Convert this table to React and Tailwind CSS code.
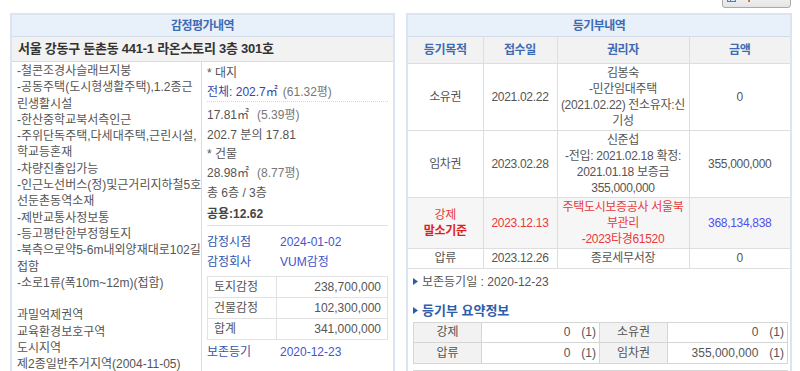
import React from 'react';

const leftLines = [
  '-철콘조경사슬래브지붕',
  '-공동주택(도시형생활주택),1.2종근',
  '린생활시설',
  '-한산중학교북서측인근',
  '-주위단독주택,다세대주택,근린시설,',
  '학교등혼재',
  '-차량진출입가능',
  '-인근노선버스(정)및근거리지하철5호',
  '선둔촌동역소재',
  '-제반교통사정보통',
  '-등고평탄한부정형토지',
  '-북측으로약5-6m내외양재대로102길',
  '접함',
  '-소로1류(폭10m~12m)(접함)',
  '',
  '과밀억제권역',
  '교육환경보호구역',
  '도시지역',
  '제2종일반주거지역(2004-11-05)',
];

const appraisal = [
  ['토지감정', '238,700,000'],
  ['건물감정', '102,300,000'],
  ['합계', '341,000,000'],
];

const registry = [
  { kind: ['소유권'], date: '2021.02.22', holder: ['김봉숙', '-민간임대주택', '(2021.02.22) 전소유자:신', '기성'], amount: '0' },
  { kind: ['임차권'], date: '2023.02.28', holder: ['신준섭', '-전입: 2021.02.18 확정:', '2021.01.18 보증금', '355,000,000'], amount: '355,000,000' },
  { kind: ['강제', '말소기준'], date: '2023.12.13', holder: ['주택도시보증공사 서울북', '부관리', '-2023타경61520'], amount: '368,134,838', base: true },
  { kind: ['압류'], date: '2023.12.26', holder: ['종로세무서장'], amount: '0' },
];

const summary = [
  ['강제', '0', '소유권', '0'],
  ['압류', '0', '임차권', '355,000,000'],
];

function Bullet() {
  return (
    <svg width="5" height="7" viewBox="0 0 5 7" className="shrink-0">
      <path d="M0 0 L5 3.5 L0 7 Z" fill="#2f5ea8" />
    </svg>
  );
}

function PanelHeader({ children }) {
  return (
    <div className="h-[22px] bg-[#e8f0fa] border-b border-[#d3dde9] flex items-center justify-center text-[12px] font-bold text-[#3d6bb3] tracking-[-0.5px]">
      {children}
    </div>
  );
}

export default function App() {
  return (
    <div className="w-[800px] h-[371px] overflow-hidden bg-white text-[12px] text-[#555] font-['Liberation_Sans','Noto_Sans_CJK_KR',sans-serif]">
      {/* top toolbar, button is cut off at the top */}
      <div className="h-[9px] overflow-hidden flex justify-end pr-[9px]">
        <button className="-mt-[14px] h-[22px] w-[69px] flex items-center gap-[4px] pl-[4px] border border-[#a9a9a9] rounded-[3px] bg-gradient-to-b from-white to-[#e4e4e4] text-[12px] text-[#333]">
          <svg width="9" height="9" viewBox="0 0 9 9">
            <rect x="0.5" y="0.5" width="8" height="8" fill="#dbe8f8" stroke="#4a7cc4" />
            <path d="M0.5 3.5 H8.5 M0.5 6 H8.5 M3.5 0.5 V8.5" stroke="#4a7cc4" strokeWidth="1" />
          </svg>
          <span>리스트</span>
        </button>
      </div>

      <div className="flex gap-[11px] pl-[10px] mt-[4px]">
        {/* 감정평가내역 */}
        <div className="w-[385px] h-[400px] border-2 border-[#dbe4f0] flex flex-col">
          <PanelHeader>감정평가내역</PanelHeader>
          <div className="h-[25px] bg-[#f2f2f2] border-b border-[#dcdcdc] flex items-center pl-[6px] text-[13px] font-bold text-[#333] tracking-[-0.25px]">
            서울 강동구 둔촌동 441-1 라온스토리 3층 301호
          </div>
          <div className="flex flex-1">
            <div className="w-[190px] border-r border-[#dcdcdc] pl-[5px] pt-[1px] leading-[16.3px] whitespace-nowrap">
              {leftLines.map((l, i) => (
                <div key={i} className="h-[16.3px]">{l}</div>
              ))}
            </div>
            <div className="flex-1 px-[5px] whitespace-nowrap">
              <div className="h-[20px] pt-[1px] flex items-center">* 대지</div>
              <div className="h-[20px] flex items-center border-b border-dotted border-[#d8d8d8]">
                <span className="text-[#3344aa]">전체: 202.7㎡</span>
                <span className="ml-[5px] text-[#777]">(61.32평)</span>
              </div>
              <div className="h-[21px] mt-[2px] flex items-center">
                17.81㎡<span className="ml-[8px] text-[#777]">(5.39평)</span>
              </div>
              <div className="h-[19px] flex items-center">202.7 분의 17.81</div>
              <div className="h-[19px] flex items-center">* 건물</div>
              <div className="h-[19px] flex items-center">
                28.98㎡<span className="ml-[8px] text-[#777]">(8.77평)</span>
              </div>
              <div className="h-[21px] flex items-center">총 6층 / 3층</div>
              <div className="h-[23px] flex items-center font-bold text-[#444] border-b border-[#e2e2e2]">공용:12.62</div>
              <div className="mt-[6px] h-[20px] flex items-center">
                <span className="w-[73px] text-[#3355aa]">감정시점</span>
                <span className="text-[#4455cc]">2024-01-02</span>
              </div>
              <div className="h-[20px] flex items-center">
                <span className="w-[73px] text-[#3355aa]">감정회사</span>
                <span className="text-[#4455cc]">VUM감정</span>
              </div>
              <table className="mt-[4px] w-full border-collapse">
                <tbody>
                  {appraisal.map(([k, v]) => (
                    <tr key={k} className="h-[21px]">
                      <td className="w-[69px] border border-[#e2e2e2] pl-[6px]">{k}</td>
                      <td className="border border-[#e2e2e2] pr-[6px] text-right">{v}</td>
                    </tr>
                  ))}
                </tbody>
              </table>
              <div className="h-[22px] mt-[1px] flex items-center">
                <span className="w-[73px] text-[#3355aa]">보존등기</span>
                <span className="text-[#4455cc]">2020-12-23</span>
              </div>
            </div>
          </div>
        </div>

        {/* 등기부내역 */}
        <div className="w-[386px] h-[400px] border-2 border-[#dbe4f0] flex flex-col">
          <PanelHeader>등기부내역</PanelHeader>
          <table className="w-full table-fixed border-collapse text-center tracking-[-0.3px]">
            <colgroup>
              <col className="w-[75px]" />
              <col className="w-[74px]" />
              <col className="w-[132px]" />
              <col />
            </colgroup>
            <thead>
              <tr className="h-[26px] bg-[#f2f2f2] text-[#3d6bb3] font-bold">
                {['등기목적', '접수일', '권리자', '금액'].map((h) => (
                  <th key={h} className="border border-t-0 border-[#dedede] font-bold first:border-l-0 last:border-r-0">{h}</th>
                ))}
              </tr>
            </thead>
            <tbody className="leading-[16px]">
              {registry.map((r, i) => (
                <tr key={i} className={`h-[20px] ${r.base ? 'bg-[#f6f6f6] text-[#e83a3a]' : ''}`}>
                  <td className="border border-[#dedede] border-l-0 py-[1px]">
                    {r.kind.map((k, j) => (
                      <div key={j} className={j === 1 ? 'font-bold text-[#e01e1e]' : ''}>{k}</div>
                    ))}
                  </td>
                  <td className="border border-[#dedede]">{r.date}</td>
                  <td className="border border-[#dedede] py-[1px] whitespace-nowrap">
                    {r.holder.map((h, j) => (
                      <div key={j}>{h}</div>
                    ))}
                  </td>
                  <td className={`border border-[#dedede] border-r-0 ${r.base ? 'text-[#5050ee]' : ''}`}>{r.amount}</td>
                </tr>
              ))}
            </tbody>
          </table>

          <div className="px-[5px]">
            <div className="h-[26px] flex items-center gap-[4px]">
              <Bullet />
              <span>보존등기일 : 2020-12-23</span>
            </div>
            <div className="h-[22px] flex items-center gap-[4px] mt-[5px]">
              <Bullet />
              <span className="text-[13px] font-bold text-[#2f5ea8]">등기부 요약정보</span>
            </div>
            <table className="w-[375px] table-fixed border-collapse">
              <colgroup>
                <col className="w-[68px]" />
                <col className="w-[118px]" />
                <col className="w-[68px]" />
                <col />
              </colgroup>
              <tbody>
                {summary.map((row) => (
                  <tr key={row[0]} className="h-[20.5px]">
                    <td className="border border-[#d6d6d6] bg-[#f2f2f2] text-center">{row[0]}</td>
                    <td className="border border-[#d6d6d6] text-right pr-[3px]">
                      {row[1]}<span className="ml-[11px]">(1)</span>
                    </td>
                    <td className="border border-[#d6d6d6] bg-[#f2f2f2] text-center">{row[2]}</td>
                    <td className="border border-[#d6d6d6] text-right pr-[3px]">
                      {row[3]}<span className="ml-[11px]">(1)</span>
                    </td>
                  </tr>
                ))}
              </tbody>
            </table>
            <table className="w-[375px] table-fixed border-collapse mt-[6px]">
              <colgroup>
                <col className="w-[68px]" />
                <col className="w-[118px]" />
                <col className="w-[68px]" />
                <col />
              </colgroup>
              <tbody>
                <tr className="h-[20.5px]">
                  <td className="border border-[#d6d6d6] bg-[#f2f2f2]"></td>
                  <td className="border border-[#d6d6d6]"></td>
                  <td className="border border-[#d6d6d6] bg-[#f2f2f2]"></td>
                  <td className="border border-[#d6d6d6]"></td>
                </tr>
              </tbody>
            </table>
          </div>
        </div>
      </div>
    </div>
  );
}
